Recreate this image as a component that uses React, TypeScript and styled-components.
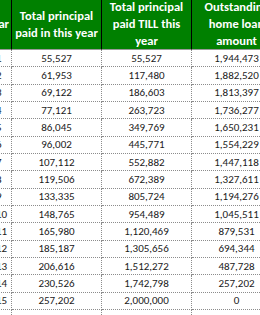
import React from "react";
import styled, { createGlobalStyle } from "styled-components";

const Global = createGlobalStyle`
  html, body { margin: 0; padding: 0; background: #ffffff; }
  body { font-family: "Carlito", "Lato", "Liberation Sans", sans-serif; }
`;

const Viewport = styled.div`
  width: 260px;
  height: 315px;
  overflow: hidden;
  background: #ffffff;
`;

const Sheet = styled.div`
  display: grid;
  grid-template-columns: 20px 90px 90px 90px;
  grid-template-rows: 50px;
  grid-auto-rows: 17.333px;
  margin-left: -8px;
  width: 290px;
`;

const HeaderCell = styled.div<{ $align?: "right" | "center" }>`
  box-sizing: border-box;
  background: #008000;
  color: #ffffff;
  font-weight: 700;
  font-size: 12.5px;
  line-height: 16.8px;
  border-right: 1px solid #000000;
  border-bottom: 1px solid #9a9a9a;
  display: flex;
  align-items: center;
  justify-content: ${(p) => (p.$align === "right" ? "flex-end" : "center")};
  text-align: center;
  padding: 0 ${(p) => (p.$align === "right" ? "2px" : "0")} 0 0;
  overflow: hidden;
  white-space: nowrap;
`;

const Cell = styled.div<{ $lead?: boolean }>`
  box-sizing: border-box;
  color: #1a1a1a;
  font-size: 11px;
  border-right: 1px dotted #8c8c8c;
  border-bottom: 1px dotted #8c8c8c;
  display: flex;
  align-items: center;
  justify-content: ${(p) => (p.$lead ? "flex-start" : "center")};
  padding-left: ${(p) => (p.$lead ? "4px" : "0")};
  overflow: hidden;
  white-space: nowrap;
`;

const rows: [number, string, string, string][] = [
  [1, "55,527", "55,527", "1,944,473"],
  [2, "61,953", "117,480", "1,882,520"],
  [3, "69,122", "186,603", "1,813,397"],
  [4, "77,121", "263,723", "1,736,277"],
  [5, "86,045", "349,769", "1,650,231"],
  [6, "96,002", "445,771", "1,554,229"],
  [7, "107,112", "552,882", "1,447,118"],
  [8, "119,506", "672,389", "1,327,611"],
  [9, "133,335", "805,724", "1,194,276"],
  [10, "148,765", "954,489", "1,045,511"],
  [11, "165,980", "1,120,469", "879,531"],
  [12, "185,187", "1,305,656", "694,344"],
  [13, "206,616", "1,512,272", "487,728"],
  [14, "230,526", "1,742,798", "257,202"],
  [15, "257,202", "2,000,000", "0"],
  [16, "", "", ""],
];

export default function App() {
  return (
    <Viewport>
      <Global />
      <Sheet>
        <HeaderCell $align="right">Year</HeaderCell>
        <HeaderCell>
          Total principal
          <br />
          paid in this year
        </HeaderCell>
        <HeaderCell>
          Total principal
          <br />
          paid TILL this
          <br />
          year
        </HeaderCell>
        <HeaderCell>
          Outstanding
          <br />
          home loan
          <br />
          amount
        </HeaderCell>
        {rows.map(([y, a, b, c]) => (
          <React.Fragment key={y}>
            <Cell $lead>{a ? y : ""}</Cell>
            <Cell>{a}</Cell>
            <Cell>{b}</Cell>
            <Cell>{c}</Cell>
          </React.Fragment>
        ))}
      </Sheet>
    </Viewport>
  );
}
